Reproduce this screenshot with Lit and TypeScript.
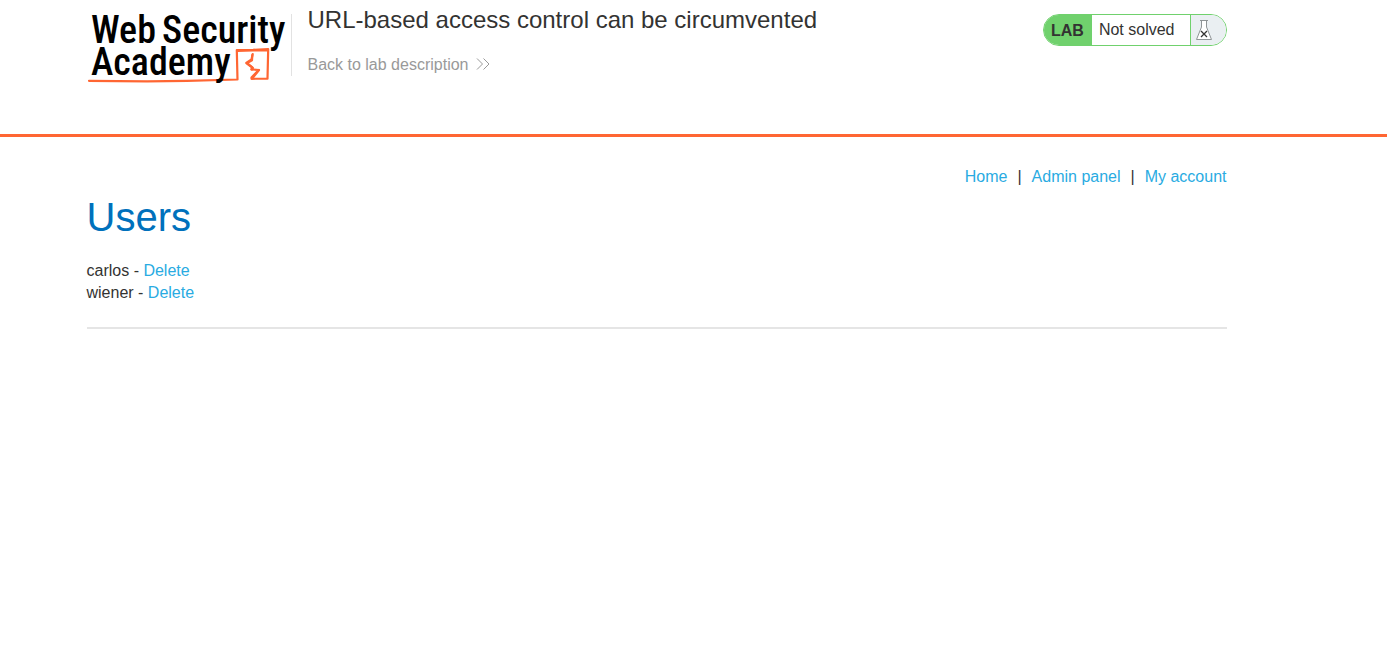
import { LitElement, html, css } from "lit";
import { customElement, state } from "lit/decorators.js";

@customElement("academy-logo")
class AcademyLogo extends LitElement {
  static styles = css`
    :host {
      display: block;
      flex: none;
    }
    svg {
      display: block;
      overflow: visible;
    }
    .word {
      font-family: "Roboto Condensed", "Liberation Sans Narrow", Roboto, "Liberation Sans", sans-serif;
      font-size: 38px;
      font-weight: 500;
      fill: #000;
    }
    .stroke {
      fill: none;
      stroke: #ff6633;
      stroke-width: 2.2;
      stroke-linejoin: round;
      stroke-linecap: round;
    }
  `;

  render() {
    return html`
      <svg width="204" height="76" viewBox="0 0 204 76" role="img" aria-label="Web Security Academy">
        <path class="stroke" d="M2 72.800 L60 73.300 L100 72.800 L150.500 71.500 L149.800 42 L166 41.800 L181.200 41 L180.500 70.600 L164.500 70.800 L164.500 69.500 L171.800 62 L164.300 61.300 L165.300 59.500 L159.300 55 L164.500 51.500 L165.700 46" />
        <path class="stroke" d="M150.500 43 L166 42.500 L180 42.500" />
        <path class="stroke" d="M165.300 47 L165 52.200 L160 55 L166 60 L165 61.500 M172 62 L166 69.500" />
        <text class="word" x="4" y="35">Web</text>
        <text class="word" x="75" y="35">Security</text>
        <text class="word" x="4" y="67">Academy</text>
      </svg>
    `;
  }
}

@customElement("lab-status")
class LabStatus extends LitElement {
  static styles = css`
    :host {
      display: block;
      flex: none;
    }
    .pill {
      display: flex;
      box-sizing: border-box;
      height: 32px;
      border: 1px solid #70d16d;
      border-radius: 16px;
      overflow: hidden;
      line-height: 30px;
      color: #333332;
      background: #fff;
    }
    .tag {
      padding: 0 8px 0 7px;
      font-weight: 700;
      line-height: 32px;
      background: #70d16d;
    }
    .text {
      padding: 0 15px 0 7px;
    }
    .flask {
      display: flex;
      align-items: center;
      width: 30px;
      padding-left: 5px;
      border-left: 1px solid #70d16d;
      background: #eaeff2;
    }
  `;

  render() {
    return html`
      <div class="pill">
        <span class="tag">LAB</span>
        <span class="text">Not solved</span>
        <span class="flask">
          <svg width="16" height="22" viewBox="0 0 16 22" aria-hidden="true">
            <path d="M5.500 1.500 V8 L0.500 20.500 H15.500 L10.500 8 V1.500 Z" fill="#fff" stroke="#8f9496" />
            <path d="M4 1.500 H12" stroke="#8f9496" />
            <path d="M5 12 L11 18 M11 12 L5 18" stroke="#333332" stroke-width="1.300" />
          </svg>
        </span>
      </div>
    `;
  }
}

@customElement("app-root")
class AppRoot extends LitElement {
  static styles = css`
    :host {
      display: block;
      font-family: "Liberation Sans", Arial, sans-serif;
      font-size: 16px;
      line-height: 22px;
      color: #333332;
    }
    .container {
      max-width: 1140px;
      margin: 0 auto;
      padding-right: 74px;
    }
    .header {
      border-bottom: 3px solid #ff6633;
    }
    .bar {
      display: flex;
      align-items: flex-start;
      height: 134px;
    }
    .logo {
      margin-top: 8px;
    }
    .title {
      flex: 1;
      height: 62px;
      margin-top: 14px;
      padding-left: 16px;
      border-left: 1px solid #e2e2e2;
    }
    h2 {
      margin: -8px 0 20px;
      font-size: 24px;
      line-height: 28px;
      font-weight: 400;
    }
    a {
      color: #29abe2;
      text-decoration: none;
    }
    .back {
      display: inline-flex;
      align-items: center;
      gap: 8px;
      color: #999;
    }
    .status {
      margin-top: 14px;
    }
    nav {
      display: flex;
      justify-content: flex-end;
      gap: 10px;
      padding-top: 29px;
    }
    h1 {
      margin: 6px 0 19px;
      font-size: 40px;
      line-height: 47px;
      font-weight: 400;
      color: #0071bc;
    }
    hr {
      height: 2px;
      margin: 23px 0 0;
      border: 0;
      background: #e5e5e5;
    }
  `;

  @state() private users = ["carlos", "wiener"];

  render() {
    return html`
      <header class="header">
        <div class="container bar">
          <academy-logo class="logo"></academy-logo>
          <div class="title">
            <h2>URL-based access control can be circumvented</h2>
            <a class="back" href="#">
              Back to lab description
              <svg width="14" height="14" viewBox="0 0 14 14" fill="none" stroke="#999" aria-hidden="true">
                <path d="M1 0.500 L6.500 6 L1 11.500 M7.500 0.500 L13 6 L7.500 11.500" />
              </svg>
            </a>
          </div>
          <lab-status class="status"></lab-status>
        </div>
      </header>
      <main class="container">
        <nav>
          <a href="#">Home</a><span>|</span>
          <a href="#">Admin panel</a><span>|</span>
          <a href="#">My account</a>
        </nav>
        <h1>Users</h1>
        ${this.users.map((name) => html`<div>${name} - <a href="#">Delete</a></div>`)}
        <hr />
      </main>
    `;
  }
}
